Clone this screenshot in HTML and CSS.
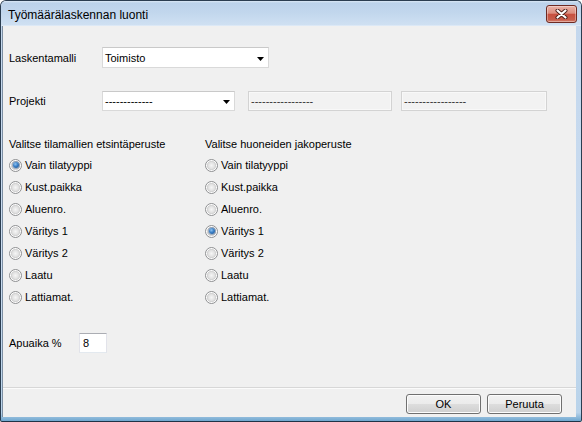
FILE: index.html
```html
<!DOCTYPE html>
<html lang="fi">
<head>
<meta charset="utf-8">
<title>Työmäärälaskennan luonti</title>
<link rel="stylesheet" href="styles.css">
</head>
<body>
<div class="window">
  <div class="titlebar">
    <span class="title">Työmäärälaskennan luonti</span>
    <div class="close">
      <svg width="13" height="10" viewBox="0 0 13 10"><path d="M2.5 1.5 L10.5 8.5 M10.5 1.5 L2.5 8.5" stroke="#4a1d16" stroke-width="4" stroke-linecap="round" fill="none"/><path d="M2.5 1.5 L10.5 8.5 M10.5 1.5 L2.5 8.5" stroke="#ffffff" stroke-width="2.2" stroke-linecap="round" fill="none"/></svg>
    </div>
  </div>
  <div class="client">
    <div class="content">
      <div class="row row-model">
        <span class="lbl">Laskentamalli</span>
        <div class="combo combo-wide">
          <span class="combo-text">Toimisto</span>
          <svg class="arrow" width="7" height="4" viewBox="0 0 7 4"><polygon points="0,0 7,0 3.5,4" fill="#000"/></svg>
        </div>
      </div>
      <div class="row row-project">
        <span class="lbl">Projekti</span>
        <div class="combo combo-narrow">
          <span class="combo-text">-------------</span>
          <svg class="arrow" width="7" height="4" viewBox="0 0 7 4"><polygon points="0,0 7,0 3.5,4" fill="#000"/></svg>
        </div>
        <div class="field field-a">-----------------</div>
        <div class="field field-b">-----------------</div>
      </div>
      <div class="groups">
        <div class="group">
          <div class="group-title">Valitse tilamallien etsintäperuste</div>
          <div class="radio"><span class="dot checked"></span><span>Vain tilatyyppi</span></div>
          <div class="radio"><span class="dot"></span><span>Kust.paikka</span></div>
          <div class="radio"><span class="dot"></span><span>Aluenro.</span></div>
          <div class="radio"><span class="dot"></span><span>Väritys 1</span></div>
          <div class="radio"><span class="dot"></span><span>Väritys 2</span></div>
          <div class="radio"><span class="dot"></span><span>Laatu</span></div>
          <div class="radio"><span class="dot"></span><span>Lattiamat.</span></div>
        </div>
        <div class="group">
          <div class="group-title">Valitse huoneiden jakoperuste</div>
          <div class="radio"><span class="dot"></span><span>Vain tilatyyppi</span></div>
          <div class="radio"><span class="dot"></span><span>Kust.paikka</span></div>
          <div class="radio"><span class="dot"></span><span>Aluenro.</span></div>
          <div class="radio"><span class="dot checked"></span><span>Väritys 1</span></div>
          <div class="radio"><span class="dot"></span><span>Väritys 2</span></div>
          <div class="radio"><span class="dot"></span><span>Laatu</span></div>
          <div class="radio"><span class="dot"></span><span>Lattiamat.</span></div>
        </div>
      </div>
      <div class="row row-time">
        <span class="lbl lbl-time">Apuaika %</span>
        <div class="num">8</div>
      </div>
    </div>
    <div class="footer">
      <div class="btn">OK</div>
      <div class="btn">Peruuta</div>
    </div>
  </div>
</div>
</body>
</html>
```
FILE: styles.css
```css
* { box-sizing: border-box; }
html, body { margin: 0; padding: 0; }
body {
  width: 582px;
  height: 422px;
  overflow: hidden;
  background: #ffffff;
  font-family: "Liberation Sans", Arial, sans-serif;
  font-size: 11px;
  color: #000;
}
.window {
  width: 582px;
  height: 422px;
  border: 1px solid #2b3d50;
  border-bottom-color: #1f3347;
  border-radius: 6px 6px 2px 2px;
  background: linear-gradient(#c3d7ed, #cadcf0 60%, #b9d3ea 98%, #6fa7cf 100%);
  display: flex;
  flex-direction: column;
  overflow: hidden;
}
.titlebar {
  height: 25px;
  flex: none;
  display: flex;
  align-items: flex-start;
  justify-content: space-between;
  padding: 0 4px 0 7px;
  background: linear-gradient(#dbe7f5 0, #bcd2ea 2px, #c2d7ed 12px, #cfe0f2 24px, #e9f1fa 25px);
}
.title {
  font-size: 12px;
  line-height: 15px;
  margin-top: 6.5px;
  color: #000;
}
.close {
  width: 31px;
  height: 18px;
  margin-top: 4px;
  border: 1px solid #6e2a22;
  border-radius: 3px;
  background: linear-gradient(#eab2a6 0%, #dc8d7e 45%, #c8503f 52%, #c75d4b 85%, #d9826f 100%);
  box-shadow: inset 0 0 0 1px rgba(255,255,255,0.35);
  display: flex;
  align-items: center;
  justify-content: center;
}
.client {
  flex: 1;
  margin: 0 5px 4px 1px;
  border-left: 1px solid #7d8fa3;
  background: #f0f0f0;
  display: flex;
  flex-direction: column;
}
.content {
  flex: 1;
  padding-left: 6px;
  display: flex;
  flex-direction: column;
}
.row {
  display: flex;
  align-items: center;
}
.row-model { margin-top: 21px; height: 21px; }
.row-project { margin-top: 23px; height: 20px; }
.row-time { margin-top: 25px; height: 20px; }
.lbl { width: 93px; flex: none; }
.lbl-time { width: 70px; }
.combo {
  height: 100%;
  background: #fff;
  border: 1px solid #d9d9d9;
  border-top-color: #c9c9c9;
  display: flex;
  align-items: center;
  justify-content: space-between;
  padding: 0 4px 0 2px;
}
.combo-wide { width: 167px; }
.combo-narrow { width: 133px; }
.arrow { margin-top: 2px; flex: none; }
.field {
  height: 100%;
  background: #f2f2f2;
  border: 1px solid #d3d3d3;
  box-shadow: inset 0 0 0 1px #f8f8f8;
  padding: 0 2px;
  display: flex;
  align-items: center;
  color: #333;
}
.field-a { width: 144px; margin-left: 13px; }
.field-b { width: 146px; margin-left: 9px; }
.groups {
  display: flex;
  margin-top: 27px;
}
.group { width: 196px; flex: none; }
.group-title { line-height: 13px; margin-bottom: 3px; }
.radio {
  height: 22px;
  display: flex;
  align-items: center;
}
.dot {
  width: 13px;
  height: 13px;
  flex: none;
  margin-right: 3px;
  border-radius: 50%;
  border: 1px solid #8f9092;
  background: radial-gradient(circle closest-side, #f6f6f6 0%, #e2e2e2 55%, #cfcfcf 80%, #fcfcfc 84%, #fcfcfc 100%);
  display: flex;
  align-items: center;
  justify-content: center;
}
.dot.checked::after {
  content: "";
  width: 6px;
  height: 6px;
  border-radius: 50%;
  background: radial-gradient(circle at 40% 35%, #8fc3f0 0%, #3a7fc6 45%, #1a4c86 100%);
  box-shadow: 0 0 0 1px rgba(30,70,120,0.35);
}
.num {
  width: 28px;
  height: 100%;
  background: #fff;
  border: 1px solid #e2e3ea;
  border-top-color: #abadb3;
  border-bottom-color: #e3e9ef;
  padding-left: 3px;
  display: flex;
  align-items: center;
}
.footer {
  height: 30px;
  flex: none;
  border-top: 1px solid #d7d7d7;
  box-shadow: inset 0 1px 0 #fbfbfb;
  display: flex;
  justify-content: flex-end;
  align-items: flex-start;
  gap: 6px;
  padding: 6px 14px 0 0;
}
.btn {
  width: 75px;
  height: 20px;
  border: 1px solid #707070;
  border-radius: 3px;
  background: linear-gradient(#f2f2f2 0%, #ebebeb 50%, #dddddd 51%, #cfcfcf 100%);
  box-shadow: inset 0 0 0 1px #fcfcfc;
  display: flex;
  align-items: center;
  justify-content: center;
}
```
